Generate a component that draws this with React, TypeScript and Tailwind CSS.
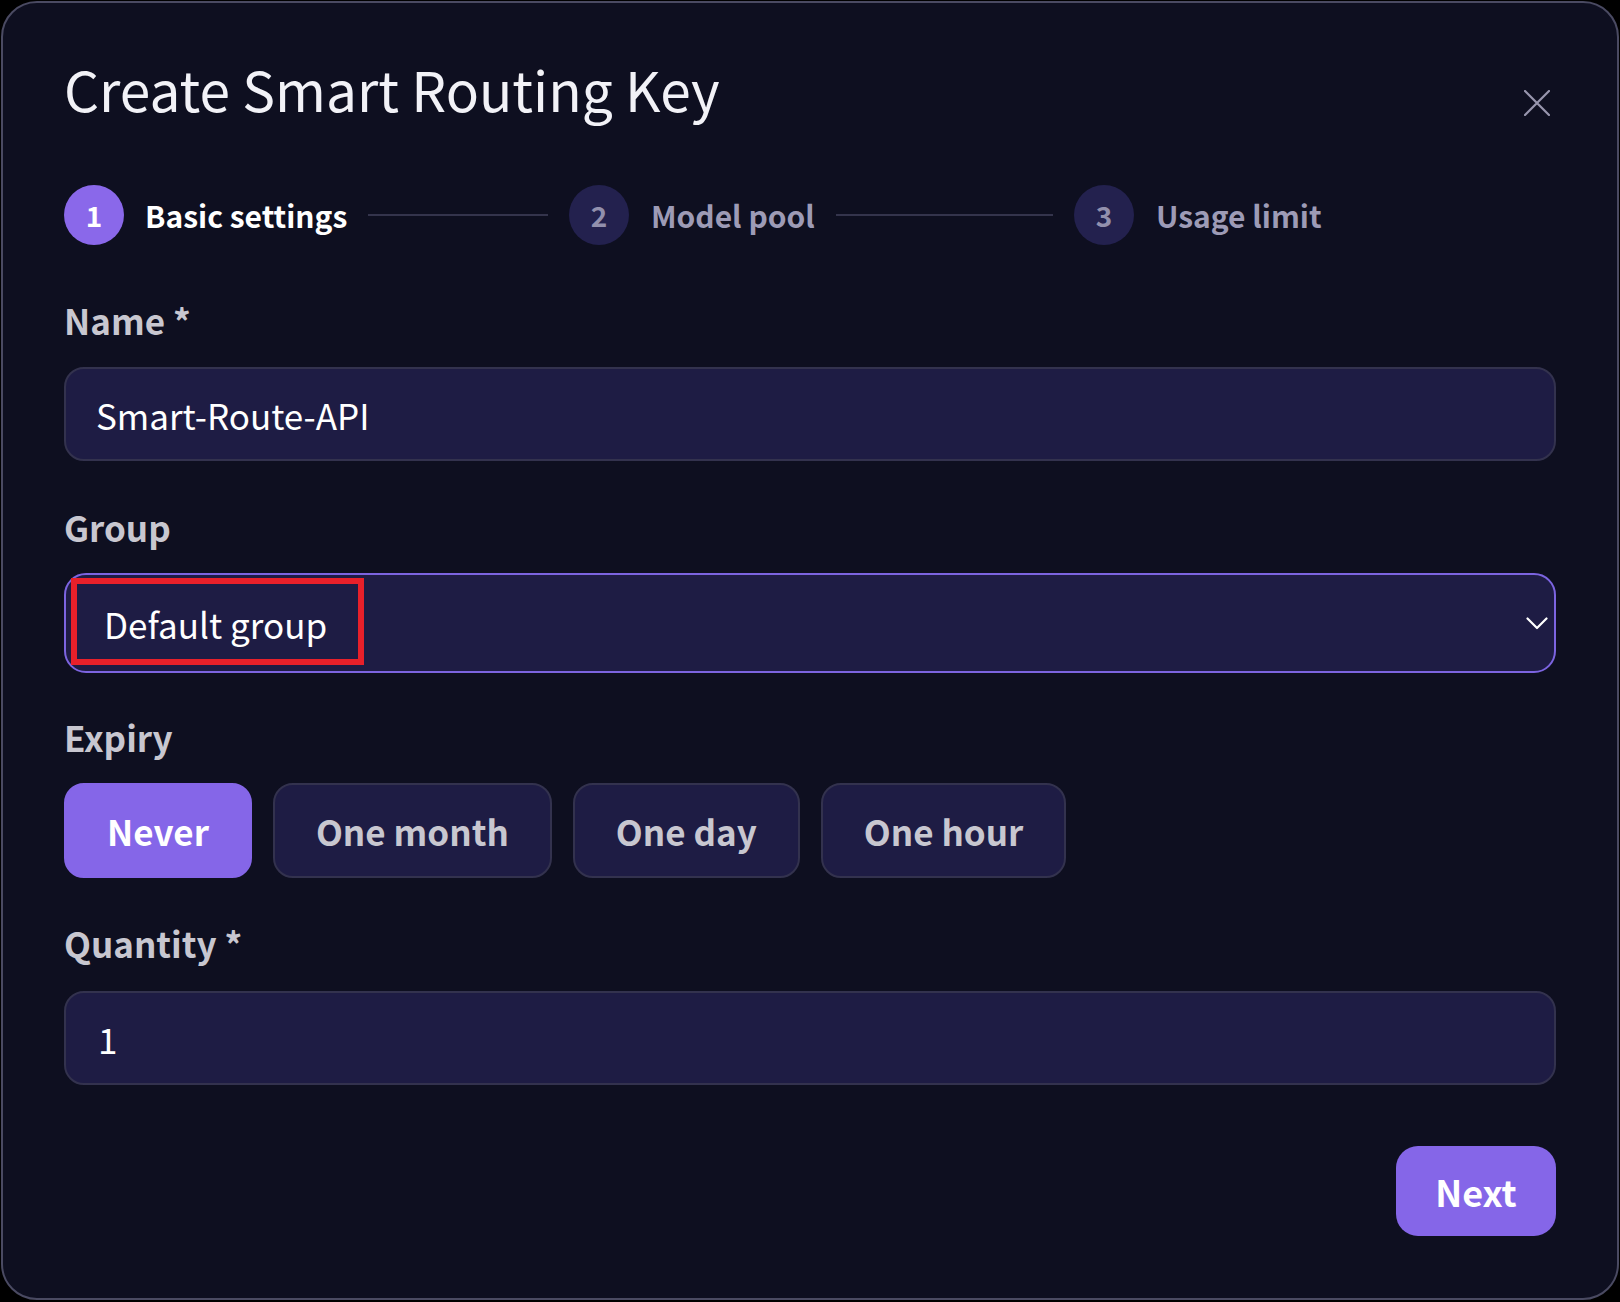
import { useState } from 'react';

const FONT = { fontFamily: '"Noto Sans CJK SC", "Noto Sans", sans-serif' };

const STEPS = ['Basic settings', 'Model pool', 'Usage limit'];
const EXPIRY = ['Never', 'One month', 'One day', 'One hour'];

function Stepper({ active }: { active: number }) {
  return (
    <div className="flex items-center">
      {STEPS.map((label, i) => {
        const isActive = i === active;
        const last = i === STEPS.length - 1;
        return (
          <div key={label} className={last ? 'flex items-center' : 'flex w-[505px] items-center'}>
            <div
              className={
                isActive
                  ? 'flex h-[60px] w-[60px] shrink-0 items-center justify-center rounded-full bg-[#8a68ea] text-[28px] font-bold leading-none text-white'
                  : 'flex h-[60px] w-[60px] shrink-0 items-center justify-center rounded-full bg-[#23214e] text-[28px] font-bold leading-none text-[#9290ad]'
              }
            >
              {i + 1}
            </div>
            <span
              className={
                isActive
                  ? 'ml-[21px] text-[30px] font-bold leading-none text-white'
                  : 'ml-[22px] text-[30px] font-bold leading-none text-[#9d9bb6]'
              }
            >
              {label}
            </span>
            {!last && <div className="mx-[21px] h-[2px] flex-1 bg-[#34344c]" />}
          </div>
        );
      })}
    </div>
  );
}

export default function App() {
  const [name, setName] = useState('Smart-Route-API');
  const [expiry, setExpiry] = useState('Never');
  const [qty, setQty] = useState('1');

  return (
    <div className="h-[1302px] w-[1620px] bg-black pl-[1px] pt-[1px]" style={FONT}>
      <div className="flex h-[1299px] w-[1618px] flex-col rounded-[36px] border-2 border-[#4a4a62] bg-[#0e0f20] px-[61px] pt-[58px]">
        {/* header */}
        <div className="flex items-start justify-between">
          <h1 className="text-[55px] font-normal leading-none text-[#f2f2f7]">Create Smart Routing Key</h1>
          <button type="button" className="mt-[23px] flex h-[38px] w-[38px] items-center justify-center text-[#9896ae]">
            <svg width="26" height="26" viewBox="0 0 26 26" fill="none" stroke="currentColor" strokeWidth="2.2" strokeLinecap="round">
              <path d="M1 1L25 25M25 1L1 25" />
            </svg>
          </button>
        </div>

        <div className="mt-[63px]">
          <Stepper active={0} />
        </div>

        {/* Name */}
        <label className="mt-[57px] text-[35px] font-bold leading-none text-[#c8c7d0]">Name *</label>
        <input
          value={name}
          onChange={(e) => setName(e.target.value)}
          className="mt-[30px] h-[94px] w-full rounded-[20px] border-2 border-[#33324e] bg-[#1e1c44] pl-[30px] text-[35px] text-white outline-none"
        />

        {/* Group */}
        <label className="mt-[48px] text-[35px] font-bold leading-none text-[#c8c7d0]">Group</label>
        <div className="relative mt-[29px] flex h-[100px] w-full items-center justify-between rounded-[22px] border-2 border-[#7c64e0] bg-[#1e1c44] pl-[38px] pr-[6px]">
          <span className="text-[35px] leading-none text-white">Default group</span>
          <svg width="22" height="13" viewBox="0 0 22 13" fill="none" stroke="#ffffff" strokeWidth="2.2" strokeLinecap="round" strokeLinejoin="round">
            <path d="M1.5 1.5L11 11L20.5 1.5" />
          </svg>
          <div className="pointer-events-none absolute left-[5px] top-[3px] h-[87px] w-[293px] border-[6px] border-[#e8202a]" />
        </div>

        {/* Expiry */}
        <label className="mt-[46px] text-[35px] font-bold leading-none text-[#c8c7d0]">Expiry</label>
        <div className="mt-[29px] flex gap-[21px]">
          {EXPIRY.map((opt) => (
            <button
              key={opt}
              type="button"
              onClick={() => setExpiry(opt)}
              className={
                expiry === opt
                  ? 'flex h-[95px] items-center rounded-[20px] border-2 border-[#8566e8] bg-[#8566e8] px-[41px] text-[35px] font-bold leading-none text-white'
                  : 'flex h-[95px] items-center rounded-[20px] border-2 border-[#33324e] bg-[#1e1c44] px-[41px] text-[35px] font-bold leading-none text-[#c8c7d0]'
              }
            >
              {opt}
            </button>
          ))}
        </div>

        {/* Quantity */}
        <label className="mt-[47px] text-[35px] font-bold leading-none text-[#c8c7d0]">Quantity *</label>
        <input
          value={qty}
          onChange={(e) => setQty(e.target.value)}
          className="mt-[31px] h-[94px] w-full rounded-[20px] border-2 border-[#33324e] bg-[#1e1c44] pl-[32px] text-[35px] text-white outline-none"
        />

        <div className="mt-[61px] flex justify-end">
          <button type="button" className="h-[90px] w-[160px] rounded-[22px] bg-[#8566e8] text-[36px] font-bold leading-none text-white">
            Next
          </button>
        </div>
      </div>
    </div>
  );
}
